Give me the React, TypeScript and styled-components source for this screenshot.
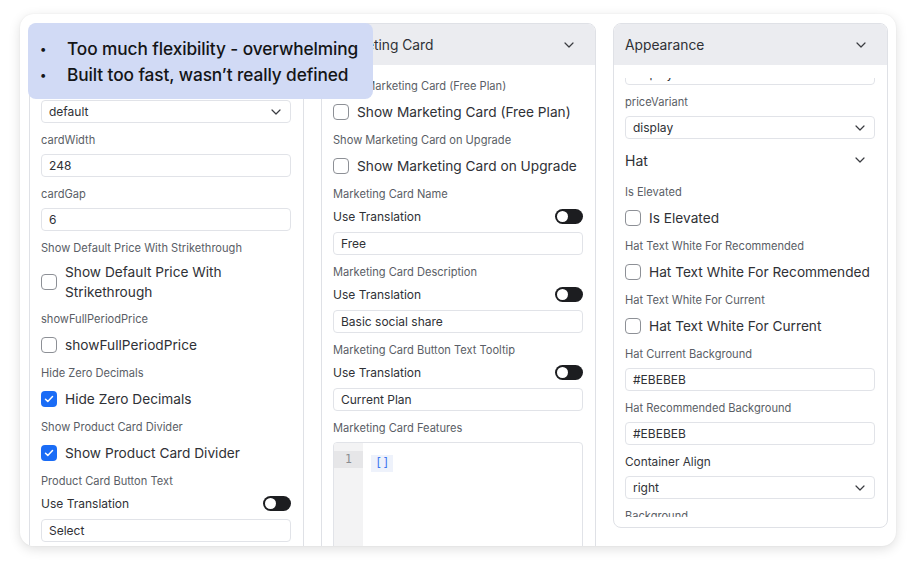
import { useLayoutEffect, useRef } from 'react';
import styled, { createGlobalStyle } from 'styled-components';

const GlobalStyle = createGlobalStyle`
  html, body {
    margin: 0;
    padding: 0;
    background: #ffffff;
  }
  body {
    font-family: 'Inter', 'Noto Sans', sans-serif;
    color: #2b2d31;
    -webkit-font-smoothing: antialiased;
  }
`;

const Stage = styled.div`
  width: 916px;
  height: 572px;
  padding: 14px 20px 0 20px;
  box-sizing: border-box;
`;

const Card = styled.div`
  position: relative;
  width: 876px;
  height: 532px;
  box-sizing: border-box;
  padding: 9px 8px 0 9px;
  background: #ffffff;
  border-radius: 14px;
  box-shadow: 0 3px 12px rgba(0, 0, 0, 0.13), 0 0 2px rgba(0, 0, 0, 0.06);
  overflow: hidden;
  display: grid;
  grid-template-columns: repeat(3, 275px);
  column-gap: 17px;
  align-items: start;
`;

const Panel = styled.section<{ $height: number }>`
  height: ${(p) => p.$height}px;
  box-sizing: border-box;
  border: 1px solid #dfe1e6;
  border-radius: 8px;
  display: flex;
  flex-direction: column;
  padding-bottom: 10px;
  background: #ffffff;
  overflow: hidden;
`;

const PanelHeader = styled.header`
  height: 41px;
  flex-shrink: 0;
  display: flex;
  align-items: center;
  justify-content: space-between;
  padding: 0 21px 0 11px;
  background: #ebecf0;
  font-size: 13.8px;
  color: #2f3136;
`;

const PanelBody = styled.div`
  flex: 1;
  overflow: hidden;
  margin-top: 13px;
  padding: 1px 12px 0 11px;
`;

const Field = styled.div`
  margin-bottom: 10px;
`;

const FieldLabel = styled.div<{ $strong?: boolean }>`
  font-size: ${(p) => (p.$strong ? '11.8px' : '11.1px')};
  line-height: 14px;
  color: ${(p) => (p.$strong ? '#34363b' : '#5a5e66')};
  margin-bottom: 7px;
  white-space: nowrap;
`;

const Box = styled.div`
  height: 23px;
  box-sizing: border-box;
  border: 1px solid #e1e3e8;
  border-radius: 4px;
  display: flex;
  align-items: center;
  justify-content: space-between;
  padding: 0 9px 0 7px;
  font-size: 12px;
  color: #2f3136;
  background: #ffffff;
`;

const CheckRow = styled.label`
  min-height: 23px;
  display: flex;
  align-items: center;
  gap: 8px;
`;

const CheckBox = styled.span<{ $checked?: boolean }>`
  width: 16px;
  height: 16px;
  flex-shrink: 0;
  box-sizing: border-box;
  border-radius: 4px;
  border: ${(p) => (p.$checked ? 'none' : '1.3px solid #8d9096')};
  background: ${(p) => (p.$checked ? '#1a6cf6' : '#ffffff')};
  display: flex;
  align-items: center;
  justify-content: center;
`;

const CheckText = styled.span`
  font-size: 13.7px;
  line-height: 20px;
  color: #2f3136;
`;

const ToggleRow = styled.div`
  height: 16px;
  display: flex;
  align-items: center;
  justify-content: space-between;
  margin-bottom: 8px;
  font-size: 12px;
  color: #2f3136;
`;

const Toggle = styled.span`
  width: 28px;
  height: 15px;
  border-radius: 8px;
  background: #1c1d20;
  display: flex;
  align-items: center;
  padding-left: 2px;
  box-sizing: border-box;
  &::before {
    content: '';
    width: 11px;
    height: 11px;
    border-radius: 50%;
    background: #ffffff;
  }
`;

const GroupHeader = styled.div`
  height: 22px;
  display: flex;
  align-items: center;
  justify-content: space-between;
  padding-right: 10px;
  margin-bottom: 14px;
  font-size: 14px;
  color: #2f3136;
`;

const Editor = styled.div`
  height: 140px;
  border: 1px solid #e1e3e8;
  border-radius: 4px;
  display: flex;
  overflow: hidden;
`;

const Gutter = styled.div`
  width: 29px;
  background: #f3f3f4;
  padding-top: 8px;
`;

const LineNo = styled.div`
  height: 17px;
  background: #e6e6e8;
  font-family: 'DejaVu Sans Mono', monospace;
  font-size: 11.5px;
  line-height: 17px;
  color: #8a8c90;
  text-align: center;
`;

const CodeArea = styled.div`
  flex: 1;
  padding: 8px 0 0 8px;
`;

const Bracket = styled.span`
  display: inline-block;
  height: 17px;
  padding: 0 4px;
  background: #eef2fb;
  font-family: 'DejaVu Sans Mono', monospace;
  font-size: 12px;
  line-height: 17px;
  color: #3f78f0;
`;

const Callout = styled.div`
  position: absolute;
  left: 8px;
  top: 9px;
  width: 345px;
  height: 76px;
  box-sizing: border-box;
  border-radius: 8px;
  background: #d1daf5;
  padding-top: 13px;
`;

const CalloutList = styled.ul`
  list-style: none;
  margin: 0;
  padding: 0 0 0 12px;
`;

const CalloutItem = styled.li`
  display: flex;
  font-size: 17.3px;
  font-weight: 500;
  line-height: 26px;
  color: #141517;
  letter-spacing: -0.1px;
  &::before {
    content: '•';
    width: 27px;
    font-size: 12px;
  }
`;

const Chevron = () => (
  <svg width='10' height='6' viewBox='0 0 10 6' fill='none'>
    <path d='M1 1l4 4 4-4' stroke='#3a3c41' strokeWidth='1.2' strokeLinecap='round' strokeLinejoin='round' />
  </svg>
);

const Tick = () => (
  <svg width='10' height='8' viewBox='0 0 10 8' fill='none'>
    <path d='M1.5 4.2l2.3 2.2L8.5 1.6' stroke='#ffffff' strokeWidth='1.5' strokeLinecap='round' strokeLinejoin='round' />
  </svg>
);

type FieldSpec =
  | { kind: 'select'; label: string; value: string; strong?: boolean }
  | { kind: 'input'; label: string; value: string }
  | { kind: 'check'; label: string; checked?: boolean }
  | { kind: 'translate'; label: string; value: string }
  | { kind: 'code'; label: string }
  | { kind: 'group'; title: string };

const productFields: FieldSpec[] = [
  { kind: 'select', label: 'cardVariant', value: 'default' },
  { kind: 'input', label: 'cardWidth', value: '248' },
  { kind: 'input', label: 'cardGap', value: '6' },
  { kind: 'check', label: 'Show Default Price With Strikethrough' },
  { kind: 'check', label: 'showFullPeriodPrice' },
  { kind: 'check', label: 'Hide Zero Decimals', checked: true },
  { kind: 'check', label: 'Show Product Card Divider', checked: true },
  { kind: 'translate', label: 'Product Card Button Text', value: 'Select' },
];

const marketingFields: FieldSpec[] = [
  { kind: 'check', label: 'Show Marketing Card (Free Plan)' },
  { kind: 'check', label: 'Show Marketing Card on Upgrade' },
  { kind: 'translate', label: 'Marketing Card Name', value: 'Free' },
  { kind: 'translate', label: 'Marketing Card Description', value: 'Basic social share' },
  { kind: 'translate', label: 'Marketing Card Button Text Tooltip', value: 'Current Plan' },
  { kind: 'code', label: 'Marketing Card Features' },
];

const appearanceFields: FieldSpec[] = [
  { kind: 'select', label: 'variant', value: 'display' },
  { kind: 'select', label: 'priceVariant', value: 'display' },
  { kind: 'group', title: 'Hat' },
  { kind: 'check', label: 'Is Elevated' },
  { kind: 'check', label: 'Hat Text White For Recommended' },
  { kind: 'check', label: 'Hat Text White For Current' },
  { kind: 'input', label: 'Hat Current Background', value: '#EBEBEB' },
  { kind: 'input', label: 'Hat Recommended Background', value: '#EBEBEB' },
  { kind: 'select', label: 'Container Align', value: 'right', strong: true },
  { kind: 'input', label: 'Background', value: '#FFFFFF' },
];

const renderField = (f: FieldSpec, i: number) => {
  switch (f.kind) {
    case 'group':
      return (
        <GroupHeader key={i}>
          {f.title}
          <Chevron />
        </GroupHeader>
      );
    case 'select':
      return (
        <Field key={i}>
          <FieldLabel $strong={f.strong}>{f.label}</FieldLabel>
          <Box>
            {f.value}
            <Chevron />
          </Box>
        </Field>
      );
    case 'input':
      return (
        <Field key={i}>
          <FieldLabel>{f.label}</FieldLabel>
          <Box>{f.value}</Box>
        </Field>
      );
    case 'check':
      return (
        <Field key={i}>
          <FieldLabel>{f.label}</FieldLabel>
          <CheckRow>
            <CheckBox $checked={f.checked}>{f.checked && <Tick />}</CheckBox>
            <CheckText>{f.label}</CheckText>
          </CheckRow>
        </Field>
      );
    case 'translate':
      return (
        <Field key={i}>
          <FieldLabel>{f.label}</FieldLabel>
          <ToggleRow>
            Use Translation
            <Toggle />
          </ToggleRow>
          <Box>{f.value}</Box>
        </Field>
      );
    case 'code':
      return (
        <Field key={i}>
          <FieldLabel>{f.label}</FieldLabel>
          <Editor>
            <Gutter>
              <LineNo>1</LineNo>
            </Gutter>
            <CodeArea>
              <Bracket>[]</Bracket>
            </CodeArea>
          </Editor>
        </Field>
      );
  }
};

type SettingsPanelProps = {
  title: string;
  fields: FieldSpec[];
  height: number;
  scrollTop?: number;
};

const SettingsPanel = ({ title, fields, height, scrollTop = 0 }: SettingsPanelProps) => {
  const bodyRef = useRef<HTMLDivElement>(null);

  useLayoutEffect(() => {
    if (bodyRef.current) bodyRef.current.scrollTop = scrollTop;
  }, [scrollTop]);

  return (
    <Panel $height={height}>
      <PanelHeader>
        {title}
        <Chevron />
      </PanelHeader>
      <PanelBody ref={bodyRef}>{fields.map(renderField)}</PanelBody>
    </Panel>
  );
};

const App = () => (
  <>
    <GlobalStyle />
    <Stage>
      <Card>
        <SettingsPanel title='Product Card' fields={productFields} height={560} />
        <SettingsPanel title='Marketing Card' fields={marketingFields} height={560} />
        <SettingsPanel title='Appearance' fields={appearanceFields} height={505} scrollTop={38} />
        <Callout>
          <CalloutList>
            <CalloutItem>Too much flexibility - overwhelming</CalloutItem>
            <CalloutItem>Built too fast, wasn’t really defined</CalloutItem>
          </CalloutList>
        </Callout>
      </Card>
    </Stage>
  </>
);

export default App;
